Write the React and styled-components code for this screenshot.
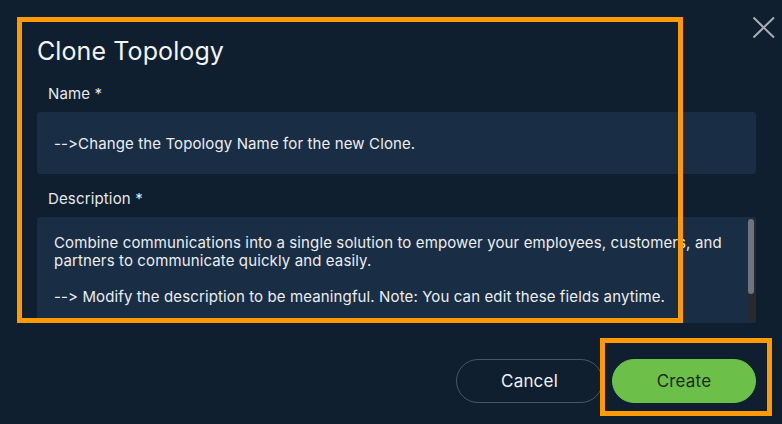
import React from "react";
import styled, { createGlobalStyle } from "styled-components";

const Global = createGlobalStyle`
  html, body { margin: 0; padding: 0; background: #0f1f30; }
  body {
    font-family: Inter, "Noto Sans", "Liberation Sans", sans-serif;
    font-feature-settings: "calt" 0, "liga" 0;
    font-variant-ligatures: none;
  }
  * { box-sizing: border-box; }
`;

const Page = styled.div`
  position: relative;
  width: 782px;
  height: 424px;
  overflow: hidden;
  background: #0f1f30;
  padding: 36px 26px 0 37px;
  display: flex;
  flex-direction: column;
`;

const Title = styled.h1`
  margin: 0;
  font-size: 25px;
  line-height: 30px;
  font-weight: 400;
  color: #f2f4f6;
  letter-spacing: 0.1px;
`;

const Field = styled.div`
  display: flex;
  flex-direction: column;
  margin-top: ${(p) => p.$top}px;
`;

const Label = styled.label`
  font-size: 15px;
  line-height: 18px;
  color: #e6e9ec;
  padding-left: 11px;
  margin-bottom: 9px;
  letter-spacing: 0.15px;
`;

const Input = styled.div`
  height: 62px;
  background: #192d45;
  border-radius: 3px;
  padding: 0 17px;
  display: flex;
  align-items: center;
  font-size: 15px;
  letter-spacing: 0.12px;
  color: #eceef0;
`;

const TextArea = styled.div`
  height: 106px;
  background: #192d45;
  border-radius: 3px;
  display: flex;
  overflow: hidden;
`;

const TextBody = styled.div`
  flex: 1;
  padding: 17px 12px 0 17px;
  font-size: 15px;
  line-height: 18px;
  letter-spacing: 0.12px;
  color: #eceef0;
  white-space: pre-wrap;
`;

const ScrollTrack = styled.div`
  width: 8px;
  margin: 2px 1px 1px 0;
  background: #26292d;
  border-radius: 4px;
  padding: 0 1px;
`;

const ScrollThumb = styled.div`
  height: 75px;
  background: #6c747d;
  border-radius: 3px;
`;

const Footer = styled.div`
  display: flex;
  justify-content: flex-end;
  gap: 9px;
  margin-top: 36px;
`;

const Button = styled.button`
  height: 44px;
  width: ${(p) => p.$w}px;
  border-radius: 22px;
  font-family: inherit;
  font-size: 17px;
  letter-spacing: 0.2px;
  cursor: pointer;
  border: 1px solid ${(p) => (p.$primary ? "#6cc04a" : "#4a5562")};
  background: ${(p) => (p.$primary ? "#6cc04a" : "transparent")};
  color: ${(p) => (p.$primary ? "#1e2a1c" : "#f0f2f4")};
`;

const Close = styled.button`
  position: absolute;
  top: 16px;
  left: 752px;
  width: 24px;
  height: 23px;
  padding: 0;
  border: none;
  background: transparent;
  cursor: pointer;
`;

const Highlight = styled.div`
  position: absolute;
  left: ${(p) => p.$x}px;
  top: ${(p) => p.$y}px;
  width: ${(p) => p.$w}px;
  height: ${(p) => p.$h}px;
  border: 5px solid #ff9a00;
  pointer-events: none;
`;

export default function App() {
  return (
    <>
      <Global />
      <Page>
        <Title>Clone Topology</Title>
        <Field $top={19}>
          <Label>Name *</Label>
          <Input>--&gt;Change the Topology Name for the new Clone.</Input>
        </Field>
        <Field $top={16}>
          <Label>Description *</Label>
          <TextArea>
            <TextBody>
              {"Combine communications into a single solution to empower your employees, customers, and partners to communicate quickly and easily.\n\n--> Modify the description to be meaningful. Note: You can edit these fields anytime."}
            </TextBody>
            <ScrollTrack>
              <ScrollThumb />
            </ScrollTrack>
          </TextArea>
        </Field>
        <Footer>
          <Button $w={147}>Cancel</Button>
          <Button $w={144} $primary>Create</Button>
        </Footer>
        <Close aria-label="Close">
          <svg width="24" height="23" viewBox="0 0 24 23">
            <path d="M1.5 1.5 L22 21.5 M22 1.5 L1.5 21.5" stroke="#a9aeb4" strokeWidth="2" fill="none" />
          </svg>
        </Close>
        <Highlight $x={17} $y={17} $w={666} $h={306} />
        <Highlight $x={600} $y={338} $w={172} $h={78} />
      </Page>
    </>
  );
}
